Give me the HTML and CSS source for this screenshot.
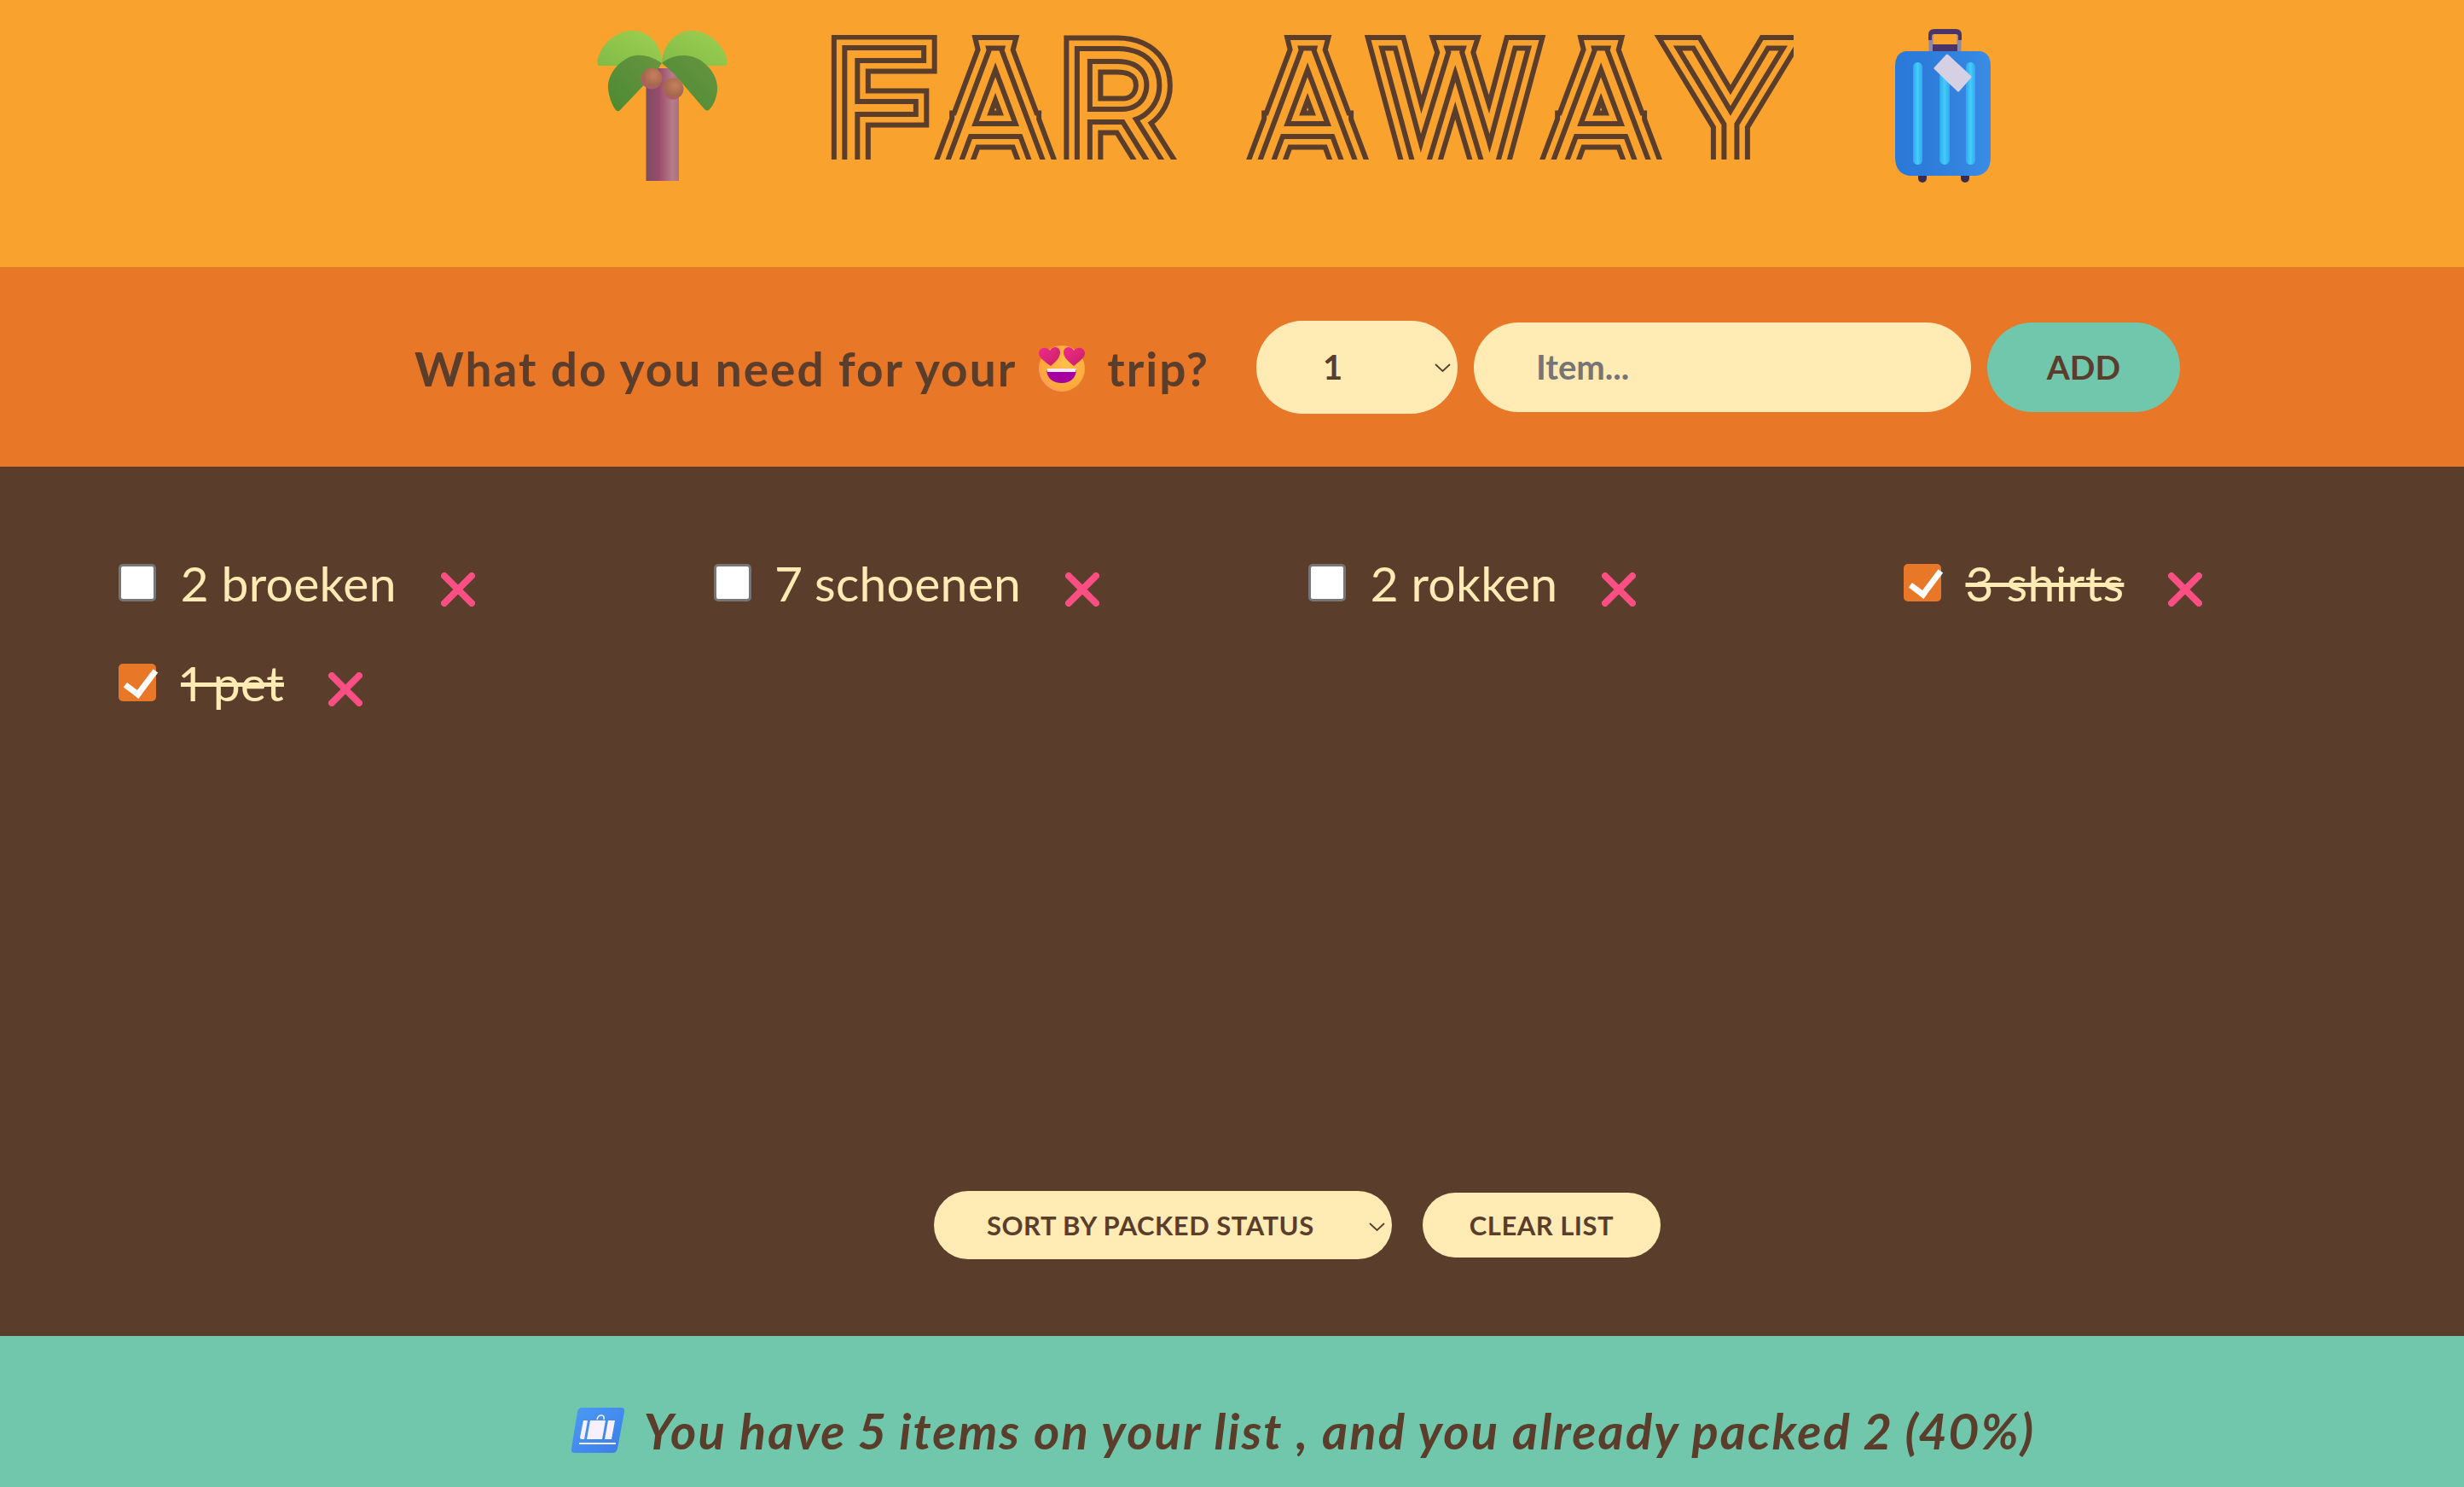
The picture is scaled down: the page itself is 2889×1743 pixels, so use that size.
FILE: index.html
```html
<!DOCTYPE html>
<html lang="nl">
<head>
<meta charset="utf-8">
<title>Far Away</title>
<link rel="stylesheet" href="styles.css">
</head>
<body>
<div class="app">
  <header class="logo">
    <svg class="palm" viewBox="0 0 153 176" aria-hidden="true">
      <defs>
        <linearGradient id="trunk" x1="0" x2="1" y1="0" y2="0"><stop offset="0" stop-color="#7c4c60"/><stop offset=".4" stop-color="#9b4b6c"/><stop offset=".8" stop-color="#b67c88"/><stop offset="1" stop-color="#a87080"/></linearGradient>
        <linearGradient id="lightLeaf" x1="0" x2="1" y1="1" y2="0"><stop offset="0" stop-color="#7fbb48"/><stop offset="1" stop-color="#9fd050"/></linearGradient>
        <linearGradient id="darkLeaf" x1="0" x2="1" y1="1" y2="0"><stop offset="0" stop-color="#4c8a32"/><stop offset="1" stop-color="#67953f"/></linearGradient>
        <radialGradient id="nut" cx=".6" cy=".35" r=".75"><stop offset="0" stop-color="#c8805c"/><stop offset=".65" stop-color="#a4684e"/><stop offset="1" stop-color="#b8508a"/></radialGradient>
      </defs>
      <rect x="57.5" y="44" width="38.5" height="132" fill="url(#trunk)"/>
      <path d="M2 41Q-2 38 3 27C12 7 30 0 42 0C60 0 76 16 76 38L40 41Z" fill="url(#lightLeaf)"/>
      <path d="M151 41Q155 38 150 27C141 7 123 0 111 0C93 0 77 16 76 38L113 41Z" fill="url(#lightLeaf)"/>
      <path d="M76 38C62 28 45 26 34 33C18 42 12 58 13 68C14 78 18 88 22 93Q25 96 28 92L68 50Z" fill="url(#darkLeaf)"/>
      <path d="M76 38C90 26 110 27 122 35C136 45 142 58 141 70C140 80 136 88 132 92Q129 95 126 92L90 50Z" fill="url(#darkLeaf)"/>
      <circle cx="64" cy="56" r="12.5" fill="url(#nut)"/>
      <circle cx="89" cy="68" r="12.5" fill="url(#nut)"/>
    </svg>
    <svg class="title" viewBox="0 -30 1131 240" role="img" aria-label="Far Away">
      <defs><clipPath id="band"><rect x="0" y="7" width="1131" height="146"/></clipPath></defs>
      <g class="stripes" clip-path="url(#band)">
        <use href="#word" class="s1"/>
        <use href="#word" class="s2"/>
        <use href="#word" class="s3"/>
        <g class="s4"><text id="word" y="161" x="5 139 278 400 505 649 849 1001">FAR AWAY</text></g>
      </g>
    </svg>
    <svg class="case" viewBox="0 0 112 180" aria-hidden="true">
      <defs>
        <linearGradient id="caseBody" x1="0" x2="1" y1="0" y2="0"><stop offset="0" stop-color="#2a78d8"/><stop offset=".5" stop-color="#2f7fdc"/><stop offset="1" stop-color="#3a8ce4"/></linearGradient>
        <linearGradient id="caseStripe" x1="0" x2="1" y1="0" y2="0"><stop offset="0" stop-color="#2fa8ee"/><stop offset=".5" stop-color="#45ccfa"/><stop offset="1" stop-color="#2fa8ee"/></linearGradient>
      </defs>
      <path class="c-handle" d="M42 28V8Q42 3 47 3H70Q75 3 75 8V28" />
      <path d="M39 13V7Q39 0 46 0H71Q78 0 78 7V13H74V8Q74 6 71 6H46Q43 6 43 8V13Z" fill="#4a3468"/>
      <rect x="44" y="18" width="29" height="9" fill="#4a3468"/>
      <rect x="27" y="165" width="10" height="15" rx="5" fill="#3a2c50"/>
      <rect x="77" y="165" width="10" height="15" rx="5" fill="#3a2c50"/>
      <path d="M12 26H100Q112 28 112 44V150Q112 169 96 172H16Q0 169 0 150V44Q0 28 12 26Z" fill="url(#caseBody)"/>
      <rect x="21" y="39" width="11" height="120" rx="5.500" fill="url(#caseStripe)"/>
      <rect x="52" y="39" width="12" height="120" rx="6" fill="url(#caseStripe)"/>
      <rect x="83" y="39" width="11" height="120" rx="5.500" fill="url(#caseStripe)"/>
      <path d="M61 31L88 56L74 72L47 46Z" fill="#d6d0e4" stroke="#d6d0e4" stroke-width="3" stroke-linejoin="round"/>
    </svg>
  </header>

  <form class="add-form">
    <h3 class="question">What do you need for your
      <svg class="face" viewBox="0 0 54 54" aria-hidden="true">
        <defs>
          <radialGradient id="faceFill" cx=".6" cy=".4" r=".7"><stop offset="0" stop-color="#ffc24a"/><stop offset=".8" stop-color="#ffa53a"/><stop offset="1" stop-color="#f590a0"/></radialGradient>
          <linearGradient id="heartFill" x1="0" x2="1" y1="0" y2="1"><stop offset="0" stop-color="#f02a90"/><stop offset="1" stop-color="#c82060"/></linearGradient>
        </defs>
        <circle cx="27" cy="27" r="27" fill="url(#faceFill)"/>
        <path d="M14 24C4 17 0 13 0 9C0 3 8 0 13 6C16 0 25 1 25 8C25 14 20 19 14 24Z" fill="url(#heartFill)"/>
        <path d="M41 24C35 19 29 14 29 8C29 1 38 0 41 6C46 0 54 3 54 9C54 13 50 17 41 24Z" fill="url(#heartFill)"/>
        <path d="M9 27H44C44 39 36 44 27 44C17 44 9 39 9 27Z" fill="#a5009f"/>
        <path d="M9 27H44L43 31H10Z" fill="#f6e6f4"/>
      </svg>
      trip?</h3>
    <select class="qty"><option>1</option></select>
    <input class="item-input" type="text" placeholder="Item...">
    <button class="add-btn" type="button">ADD</button>
  </form>

  <section class="list">
    <ul class="items">
      <li class="item"><input class="check" type="checkbox"><span class="label">2 broeken</span><button class="del" type="button" aria-label="verwijder"><svg class="cross" viewBox="0 0 40 40"><path d="M4 4L36 36M36 4L4 36"/></svg></button></li>
      <li class="item"><input class="check" type="checkbox"><span class="label">7 schoenen</span><button class="del" type="button" aria-label="verwijder"><svg class="cross" viewBox="0 0 40 40"><path d="M4 4L36 36M36 4L4 36"/></svg></button></li>
      <li class="item"><input class="check" type="checkbox"><span class="label">2 rokken</span><button class="del" type="button" aria-label="verwijder"><svg class="cross" viewBox="0 0 40 40"><path d="M4 4L36 36M36 4L4 36"/></svg></button></li>
      <li class="item"><input class="check" type="checkbox" checked><span class="label done">3 shirts</span><button class="del" type="button" aria-label="verwijder"><svg class="cross" viewBox="0 0 40 40"><path d="M4 4L36 36M36 4L4 36"/></svg></button></li>
      <li class="item"><input class="check" type="checkbox" checked><span class="label done">1 pet</span><button class="del" type="button" aria-label="verwijder"><svg class="cross" viewBox="0 0 40 40"><path d="M4 4L36 36M36 4L4 36"/></svg></button></li>
    </ul>
    <div class="actions">
      <select class="sort"><option>SORT BY PACKED STATUS</option></select>
      <button class="clear" type="button">CLEAR LIST</button>
    </div>
  </section>

  <footer class="stats">
    <svg class="claim" viewBox="0 0 63 53" aria-hidden="true">
      <defs><linearGradient id="claimFill" x1="0" x2="1" y1="0" y2="1"><stop offset="0" stop-color="#4a9cf4"/><stop offset="1" stop-color="#3c7ce8"/></linearGradient></defs>
      <path d="M12 0H58Q63 0 62 5L54 48Q53 53 48 53H4Q-1 53 0 48L7 5Q8 0 12 0Z" fill="url(#claimFill)"/>
      <path d="M14 15H19L15 37H12Q10 37 10 35Z M22 15H40L36 37H18Z M43 15H51L47 37H39Z" fill="#f8f0ff"/>
      <path d="M30 14Q31 9 35 9Q39 9 38 14" fill="none" stroke="#f8f0ff" stroke-width="1.5"/>
      <path d="M9 42H52" stroke="#f8f0ff" stroke-width="2"/>
    </svg>
    <em class="stats-text">You have 5 items on your list , and you already packed 2 (40%)</em>
  </footer>
</div>
</body>
</html>
```
FILE: styles.css
```css
* { box-sizing: border-box; margin: 0; padding: 0; }
body { font-family: "Lato", "Open Sans", sans-serif; color: #5a3e2b; font-feature-settings: "pnum"; }
.app { display: grid; grid-template-rows: auto auto 1fr auto; height: 100vh; }

.logo { height: 313px; background: #f9a22d; display: flex; justify-content: center; align-items: center; gap: 119px; padding: 0 0 65px 145px; }
.palm { width: 153px; height: 176px; flex: none; }
.title { width: 1131px; height: 240px; flex: none; }
.case { width: 112px; height: 180px; flex: none; }
.c-handle { fill: none; stroke: #8a8aa8; stroke-width: 5; }

.stripes { font-family: "Roboto", sans-serif; font-weight: 100; font-size: 188px; fill: none; stroke-linejoin: miter; stroke-miterlimit: 6; }
.s1 { stroke: #5a3e2b; stroke-width: 41px; }
.s2 { stroke: #f9a22d; stroke-width: 29px; }
.s3 { stroke: #5a3e2b; stroke-width: 16px; }
.s4 { stroke: #f9a22d; stroke-width: 4px; fill: #f9a22d; }

.add-form { height: 234px; background: #e87728; display: flex; justify-content: center; align-items: center; gap: 19px; padding-left: 153px; }
.question { font-size: 55px; font-weight: 700; letter-spacing: 2px; margin-right: 36px; display: flex; align-items: center; gap: 26px; white-space: nowrap; padding-top: 4px; }
.face { width: 54px; height: 54px; }
.qty, .item-input, .add-btn, .sort, .clear { background-color: #ffebb3; color: #5a3e2b; font-family: inherit; font-weight: 700; border: none; border-radius: 184px; }
.qty, .sort { appearance: none; background-repeat: no-repeat; background-image: url("data:image/svg+xml,%3Csvg xmlns='http://www.w3.org/2000/svg' viewBox='0 0 19 10'%3E%3Cpath d='M1 1L9.500 9L18 1' fill='none' stroke='%235a3e2b' stroke-width='1.800'/%3E%3C/svg%3E"); background-size: 19px 10px; }
.qty { width: 236px; height: 109px; font-size: 40px; padding-left: 78px; background-position: 209px 50px; }
.item-input { width: 583px; height: 105px; font-size: 40px; padding-left: 73px; }
.add-btn { width: 226px; height: 105px; font-size: 39px; background-color: #71c7ab; }

.list { background: #5a3e2b; color: #ffebb3; display: flex; flex-direction: column; justify-content: space-between; padding: 101px 0 90px 139px; }
.items { list-style: none; display: grid; grid-template-columns: repeat(4, 520px); column-gap: 177.5px; row-gap: 47px; }
.item { display: flex; align-items: center; gap: 29px; height: 70px; }
.check { appearance: none; width: 44px; height: 44px; flex: none; position: relative; background: #fff; border: 3px solid #767676; border-radius: 5px; }
.check:checked { background: #e87728; border-color: #e87728; }
.check:checked::after { content: ""; position: absolute; left: 12px; top: -3px; width: 15px; height: 31px; border: solid #fff; border-width: 0 7px 7px 0; transform: rotate(37deg); }
.label { font-size: 57px; letter-spacing: .3px; white-space: nowrap; }
.done { text-decoration: line-through; }
.del { background: none; border: none; margin: 16px 0 0 23px; display: flex; }
.cross { width: 40px; height: 40px; fill: none; stroke: #fb4f83; stroke-width: 8px; stroke-linecap: round; }

.actions { display: flex; justify-content: center; align-items: center; gap: 36px; padding-left: 14px; }
.sort { width: 537px; height: 80px; font-size: 31px; padding-left: 62px; letter-spacing: .5px; background-position: 510px 37px; }
.clear { width: 279px; height: 76px; font-size: 31px; letter-spacing: .5px; }

.stats { height: 177px; background: #71c7ab; display: flex; justify-content: center; align-items: center; gap: 22px; padding: 44px 0 0 167px; }
.claim { width: 63px; height: 53px; flex: none; }
.stats-text { font-size: 58px; font-weight: 700; font-style: italic; letter-spacing: 2.1px; white-space: nowrap; }
```
